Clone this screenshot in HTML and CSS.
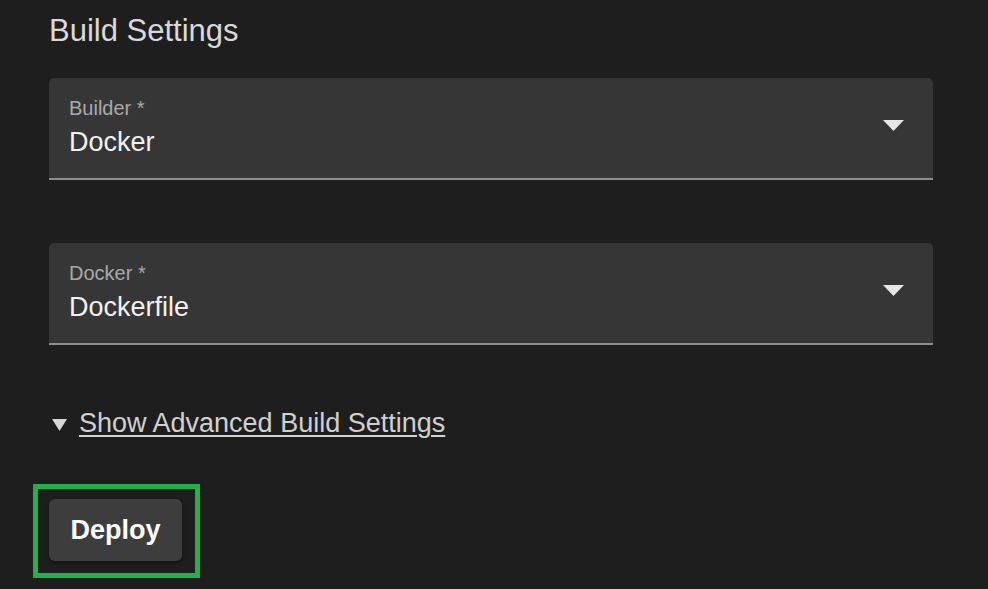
FILE: index.html
```html
<!DOCTYPE html>
<html lang="en">
<head>
<meta charset="utf-8">
<title>Build Settings</title>
<link rel="stylesheet" href="styles.css">
</head>
<body>
<main class="page">
  <h2 class="title">Build Settings</h2>

  <div class="field">
    <div class="field-text">
      <span class="field-label">Builder *</span>
      <span class="field-value">Docker</span>
    </div>
    <svg class="field-arrow" width="21" height="11" viewBox="0 0 21 11"><path d="M0 0 H21 L10.5 11 Z" fill="#e6e6e6"/></svg>
  </div>

  <div class="field field-second">
    <div class="field-text">
      <span class="field-label">Docker *</span>
      <span class="field-value">Dockerfile</span>
    </div>
    <svg class="field-arrow" width="21" height="11" viewBox="0 0 21 11"><path d="M0 0 H21 L10.5 11 Z" fill="#e6e6e6"/></svg>
  </div>

  <div class="advanced">
    <svg class="advanced-marker" width="15" height="12" viewBox="0 0 15 12"><path d="M0 0 H15 L7.5 12 Z" fill="#d6d6d6"/></svg>
    <a class="advanced-link" href="#">Show Advanced Build Settings</a>
  </div>

  <div class="highlight">
    <button class="deploy" type="button">Deploy</button>
  </div>
</main>
</body>
</html>
```

FILE: styles.css
```css
html, body {
  margin: 0;
  padding: 0;
  background: #1e1e1e;
}

body {
  font-family: "Liberation Sans", Arial, sans-serif;
  color: #e8e8e8;
  height: 589px;
  overflow: hidden;
}

.page {
  display: flex;
  flex-direction: column;
  align-items: flex-start;
  padding: 12px 0 0 49px;
  width: 884px;
}

.title {
  margin: 0;
  font-size: 31px;
  line-height: 37px;
  font-weight: 400;
  color: #d9d9d9;
}

.field {
  margin-top: 29px;
  align-self: stretch;
  height: 100px;
  display: flex;
  align-items: flex-start;
  justify-content: space-between;
  background: #363636;
  border-radius: 5px 5px 0 0;
  border-bottom: 2px solid #8e8e8e;
  padding: 0 29px 0 20px;
}

.field-second {
  margin-top: 63px;
}

.field-text {
  display: flex;
  flex-direction: column;
  padding-top: 19px;
}

.field-label {
  font-size: 20px;
  line-height: 22px;
  color: #a9a9a9;
}

.field-value {
  margin-top: 7px;
  font-size: 27px;
  line-height: 32px;
  color: #f2f2f2;
}

.field-arrow {
  margin-top: 42px;
  display: block;
}

.advanced {
  margin-top: 62px;
  display: flex;
  align-items: center;
  gap: 12px;
  padding-left: 3px;
}

.advanced-marker {
  display: block;
  margin-top: 3px;
}

.advanced-link {
  font-size: 27px;
  line-height: 32px;
  color: #d0d0d0;
  text-decoration: underline;
  text-decoration-thickness: 2px;
  text-underline-offset: 3px;
}

.highlight {
  margin-top: 45px;
  margin-left: -16px;
  border: 5px solid #22b14c;
  padding: 10px 13px 12px 11px;
}

.deploy {
  display: block;
  width: 133px;
  height: 62px;
  border: none;
  border-radius: 6px;
  background: #3d3d3d;
  box-shadow: 0 2px 4px rgba(0, 0, 0, 0.45);
  font-family: "Liberation Sans", Arial, sans-serif;
  font-size: 27px;
  font-weight: 700;
  color: #ffffff;
  padding: 0;
}
```
